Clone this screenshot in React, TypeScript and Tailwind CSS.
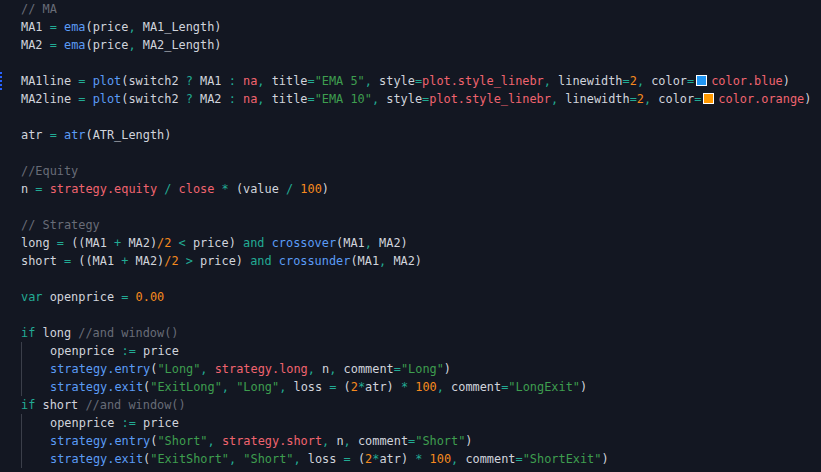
type Tok = [string, string];

const T = 'text-[#d1d4dc]';
const C = 'text-[#686c77]';
const O = 'text-[#22ab94]';
const F = 'text-[#5b9cf6]';
const R = 'text-[#f0646f]';
const S = 'text-[#3e9e4f]';
const N = 'text-[#f68a1e]';

function Swatch({ color }: { color: 'blue' | 'orange' }) {
  return (
    <span
      className={
        color === 'blue'
          ? 'inline-block w-[11px] h-[11px] ml-[2px] mr-[4px] border border-white bg-[#2196f3] align-[-1px]'
          : 'inline-block w-[11px] h-[11px] ml-[2px] mr-[4px] border border-white bg-[#ff9800] align-[-1px]'
      }
    />
  );
}

function Line({ toks, swatch }: { toks: Tok[]; swatch?: { at: number; color: 'blue' | 'orange' } }) {
  return (
    <div className="h-[18px] whitespace-pre">
      {toks.map((t, i) => (
        <span key={i}>
          {swatch && swatch.at === i && <Swatch color={swatch.color} />}
          <span className={t[0]}>{t[1]}</span>
        </span>
      ))}
    </div>
  );
}

const Blank = () => <div className="h-[18px]" />;

const maLine = (n: string): Tok[] => [
  [T, `MA${n} `], [O, '='], [T, ' '], [F, 'ema'], [T, '(price'], [O, ','], [T, ` MA${n}_Length)`],
];

const plotLine = (n: string, title: string, col: string): Tok[] => [
  [T, `MA${n}line `], [O, '='], [T, ' '], [F, 'plot'], [T, '(switch2 '], [O, '?'], [T, ` MA${n} `], [O, ':'], [T, ' '],
  [R, 'na'], [O, ','], [T, ' title'], [O, '='], [S, `"${title}"`], [O, ','], [T, ' style'], [O, '='],
  [R, 'plot.style_linebr'], [O, ','], [T, ' linewidth'], [O, '='], [N, '2'], [O, ','], [T, ' color'], [O, '='],
  [R, `color.${col}`], [T, ')'],
];

const cross = (name: string, cmp: string, fn: string): Tok[] => [
  [T, `${name} `], [O, '='], [T, ' ((MA1 '], [O, '+'], [T, ' MA2)'], [N, '/2'], [T, ' '], [O, cmp], [T, ' price) '],
  [O, 'and'], [T, ' '], [F, fn], [T, '(MA1'], [O, ','], [T, ' MA2)'],
];

const block = (side: string, Side: string) => [
  [[T, 'openprice '], [O, ':='], [T, ' price']] as Tok[],
  [[F, 'strategy.entry'], [T, '('], [S, `"${Side}"`], [O, ','], [T, ' '], [R, `strategy.${side}`], [O, ','], [T, ' n'],
    [O, ','], [T, ' comment'], [O, '='], [S, `"${Side}"`], [T, ')']] as Tok[],
  [[F, 'strategy.exit'], [T, '('], [S, `"Exit${Side}"`], [O, ','], [T, ' '], [S, `"${Side}"`], [O, ','], [T, ' loss '],
    [O, '='], [T, ' ('], [N, '2'], [O, '*'], [T, 'atr) '], [O, '*'], [T, ' '], [N, '100'], [O, ','], [T, ' comment'],
    [O, '='], [S, `"${Side}Exit"`], [T, ')']] as Tok[],
];

function Block({ lines }: { lines: Tok[][] }) {
  return (
    <div className="border-l border-[#3b3f4a] pl-[28px]">
      {lines.map((l, i) => (
        <Line key={i} toks={l} />
      ))}
    </div>
  );
}

export default function App() {
  return (
    <div className="relative w-[821px] h-[472px] overflow-hidden bg-[#131722] font-['DejaVu_Sans_Mono',monospace] text-[11.9px] leading-[18px] text-[#d1d4dc]">
      <div className="absolute left-0 top-[72px] h-[18px] border-l-2 border-dotted border-[#2962ff]" />
      <div className="pl-[21px]">
        <Line toks={[[C, '// MA']]} />
        <Line toks={maLine('1')} />
        <Line toks={maLine('2')} />
        <Blank />
        <Line toks={plotLine('1', 'EMA 5', 'blue')} swatch={{ at: 25, color: 'blue' }} />
        <Line toks={plotLine('2', 'EMA 10', 'orange')} swatch={{ at: 25, color: 'orange' }} />
        <Blank />
        <Line toks={[[T, 'atr '], [O, '='], [T, ' '], [F, 'atr'], [T, '(ATR_Length)']]} />
        <Blank />
        <Line toks={[[C, '//Equity']]} />
        <Line
          toks={[
            [T, 'n '], [O, '='], [T, ' '], [R, 'strategy.equity'], [T, ' '], [O, '/'], [T, ' '], [R, 'close'], [T, ' '],
            [O, '*'], [T, ' (value '], [O, '/'], [T, ' '], [N, '100'], [T, ')'],
          ]}
        />
        <Blank />
        <Line toks={[[C, '// Strategy']]} />
        <Line toks={cross('long', '<', 'crossover')} />
        <Line toks={cross('short', '>', 'crossunder')} />
        <Blank />
        <Line toks={[[O, 'var'], [T, ' openprice '], [O, '='], [T, ' '], [N, '0.00']]} />
        <Blank />
        <Line toks={[[O, 'if'], [T, ' long '], [C, '//and window()']]} />
        <Block lines={block('long', 'Long')} />
        <Line toks={[[O, 'if'], [T, ' short '], [C, '//and window()']]} />
        <Block lines={block('short', 'Short')} />
      </div>
    </div>
  );
}
